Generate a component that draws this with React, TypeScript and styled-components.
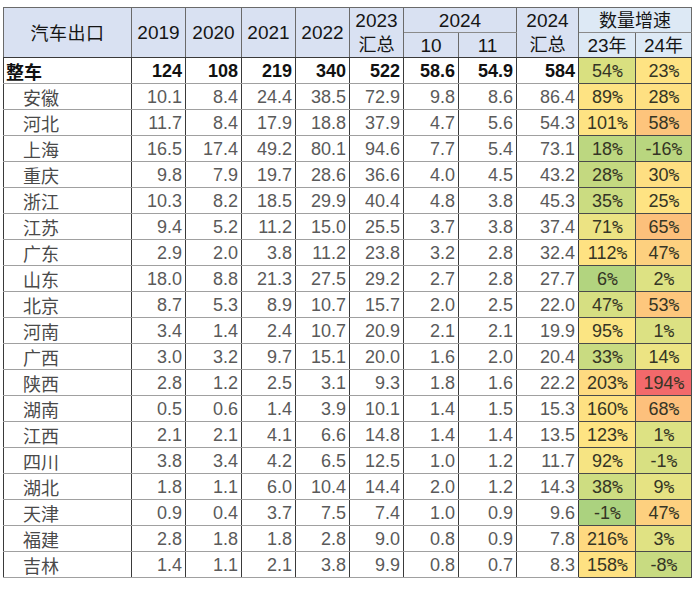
import React from "react";
import styled, { createGlobalStyle } from "styled-components";

const GlobalStyle = createGlobalStyle`
  body {
    margin: 0;
    background: #ffffff;
    font-family: "Liberation Sans", "Noto Sans CJK SC", sans-serif;
  }
`;

type Row = {
  name: string;
  values: string[];
  g23: string;
  g24: string;
  c23: string;
  c24: string;
};

const rows: Row[] = [
  { name: "安徽", values: ["10.1", "8.4", "24.4", "38.5", "72.9", "9.8", "8.6", "86.4"], g23: "89", g24: "28", c23: "#fee383", c24: "#fee082" },
  { name: "河北", values: ["11.7", "8.4", "17.9", "18.8", "37.9", "4.7", "5.6", "54.3"], g23: "101", g24: "58", c23: "#fee383", c24: "#fdc47c" },
  { name: "上海", values: ["16.5", "17.4", "49.2", "80.1", "94.6", "7.7", "5.4", "73.1"], g23: "18", g24: "-16", c23: "#bcd780", c24: "#b9d67f" },
  { name: "重庆", values: ["9.8", "7.9", "19.7", "28.6", "36.6", "4.0", "4.5", "43.2"], g23: "28", g24: "30", c23: "#c4d980", c24: "#fedf82" },
  { name: "浙江", values: ["10.3", "8.2", "18.5", "29.9", "40.4", "4.8", "3.8", "45.3"], g23: "35", g24: "25", c23: "#cbdc81", c24: "#fee383" },
  { name: "江苏", values: ["9.4", "5.2", "11.2", "15.0", "25.5", "3.7", "3.8", "37.4"], g23: "71", g24: "65", c23: "#ece383", c24: "#fcc07b" },
  { name: "广东", values: ["2.9", "2.0", "3.8", "11.2", "23.8", "3.2", "2.8", "32.4"], g23: "112", g24: "47", c23: "#fee282", c24: "#fdd07f" },
  { name: "山东", values: ["18.0", "8.8", "21.3", "27.5", "29.2", "2.7", "2.8", "27.7"], g23: "6", g24: "2", c23: "#b2d47f", c24: "#dde283" },
  { name: "北京", values: ["8.7", "5.3", "8.9", "10.7", "15.7", "2.0", "2.5", "22.0"], g23: "47", g24: "53", c23: "#d6df82", c24: "#fdc77d" },
  { name: "河南", values: ["3.4", "1.4", "2.4", "10.7", "20.9", "2.1", "2.1", "19.9"], g23: "95", g24: "1", c23: "#fbe583", c24: "#dce183" },
  { name: "广西", values: ["3.0", "3.2", "9.7", "15.1", "20.0", "1.6", "2.0", "20.4"], g23: "33", g24: "14", c23: "#c9db81", c24: "#ece483" },
  { name: "陕西", values: ["2.8", "1.2", "2.5", "3.1", "9.3", "1.8", "1.6", "22.2"], g23: "203", g24: "194", c23: "#fedb81", c24: "#f2696b" },
  { name: "湖南", values: ["0.5", "0.6", "1.4", "3.9", "10.1", "1.4", "1.5", "15.3"], g23: "160", g24: "68", c23: "#fee182", c24: "#fdc07c" },
  { name: "江西", values: ["2.1", "2.1", "4.1", "6.6", "14.8", "1.4", "1.4", "13.5"], g23: "123", g24: "1", c23: "#fee483", c24: "#dde283" },
  { name: "四川", values: ["3.8", "3.4", "4.2", "6.5", "12.5", "1.0", "1.2", "11.7"], g23: "92", g24: "-1", c23: "#f6e483", c24: "#d8e082" },
  { name: "湖北", values: ["1.8", "1.1", "6.0", "10.4", "14.4", "2.0", "1.2", "14.3"], g23: "38", g24: "9", c23: "#cedd81", c24: "#e6e383" },
  { name: "天津", values: ["0.9", "0.4", "3.7", "7.5", "7.4", "1.0", "0.9", "9.6"], g23: "-1", g24: "47", c23: "#abd27f", c24: "#fdd07f" },
  { name: "福建", values: ["2.8", "1.8", "1.8", "2.8", "9.0", "0.8", "0.9", "7.8"], g23: "216", g24: "3", c23: "#fed980", c24: "#e0e283" },
  { name: "吉林", values: ["1.4", "1.1", "2.1", "3.8", "9.9", "0.8", "0.7", "8.3"], g23: "158", g24: "-8", c23: "#fee182", c24: "#c8db81" },
];

const total = {
  values: ["124", "108", "219", "340", "522", "58.6", "54.9", "584"],
  g23: "54",
  g24: "23",
  c23: "#d9e080",
  c24: "#fee383",
};

const widths = [128, 54, 56, 54, 54, 54, 55, 58, 62, 57, 56];

const Page = styled.div`
  padding: 7px 0 0 3px;
`;

const Table = styled.table`
  border-collapse: collapse;
  table-layout: fixed;
  width: 689px;
  border-top: 1px solid #3a3a3a;
  border-left: 1px solid #3a3a3a;
`;

const HeadCell = styled.th<{ $light?: boolean }>`
  height: 24px;
  padding: 0;
  background: ${(p) => (p.$light ? "#dde9f5" : "#d9e1f2")};
  border: 1px solid #6a6a6a;
  border-bottom-color: #3a3a3a;
  color: #151515;
  font-size: 19px;
  font-weight: 400;
  line-height: 23px;
  text-align: center;
  white-space: nowrap;
`;

const SubHeadCell = styled(HeadCell)`
  border-top-color: #8a8a8a;
  border-bottom: 1px solid #3a3a3a;
`;

const Cjk = styled.span`
  font-family: "Noto Sans CJK SC", sans-serif;
  font-size: 18px;
  line-height: 23px;
`;

const TitleCjk = styled(Cjk)`
  letter-spacing: 0.5px;
`;

const BodyRow = styled.tr<{ $bold?: boolean }>`
  height: 26px;
  color: ${(p) => (p.$bold ? "#111111" : "#5a5a5a")};
  font-weight: ${(p) => (p.$bold ? 700 : 400)};
`;

const NameCell = styled.td<{ $bold?: boolean }>`
  padding: 0 0 0 ${(p) => (p.$bold ? 2 : 19)}px;
  border-right: 1px solid #3a3a3a;
  border-bottom: 1px solid #a0a0a0;
  font-family: "Noto Sans CJK SC", sans-serif;
  font-size: 18px;
  line-height: 24px;
  color: ${(p) => (p.$bold ? "#111111" : "#4a4a4a")};
  white-space: nowrap;
`;

const NumCell = styled.td`
  padding: 0 3px 0 0;
  border-right: 1px solid #3a3a3a;
  border-bottom: 1px solid #a0a0a0;
  font-size: 18px;
  line-height: 24px;
  text-align: right;
  white-space: nowrap;
`;

const PctCell = styled.td<{ $bg: string }>`
  padding: 0;
  background: ${(p) => p.$bg};
  border: 1px solid #4a4a4a;
  border-top: none;
  color: #353525;
  font-size: 18px;
  font-weight: 400;
  line-height: 24px;
  text-align: center;
  white-space: nowrap;
`;

const PctSign = styled.span`
  font-family: "DejaVu Sans Mono", monospace;
  font-size: 18px;
  line-height: 20px;
  letter-spacing: -1px;
`;

const Pct = ({ v }: { v: string }) => (
  <>
    {v}
    <PctSign>%</PctSign>
  </>
);

const App = () => {
  return (
    <Page>
      <GlobalStyle />
      <Table>
        <colgroup>
          {widths.map((w, i) => (
            <col key={i} style={{ width: w }} />
          ))}
        </colgroup>
        <thead>
          <tr>
            <HeadCell rowSpan={2}>
              <TitleCjk>汽车出口</TitleCjk>
            </HeadCell>
            <HeadCell rowSpan={2}>2019</HeadCell>
            <HeadCell rowSpan={2}>2020</HeadCell>
            <HeadCell rowSpan={2}>2021</HeadCell>
            <HeadCell rowSpan={2}>2022</HeadCell>
            <HeadCell rowSpan={2}>
              2023
              <br />
              <Cjk>汇总</Cjk>
            </HeadCell>
            <HeadCell colSpan={2} style={{ borderBottomColor: "#8a8a8a" }}>
              2024
            </HeadCell>
            <HeadCell rowSpan={2}>
              2024
              <br />
              <Cjk>汇总</Cjk>
            </HeadCell>
            <HeadCell colSpan={2} $light style={{ borderBottomColor: "#8a8a8a" }}>
              <Cjk>数量增速</Cjk>
            </HeadCell>
          </tr>
          <tr>
            <SubHeadCell>10</SubHeadCell>
            <SubHeadCell>11</SubHeadCell>
            <SubHeadCell $light>
              23<Cjk>年</Cjk>
            </SubHeadCell>
            <SubHeadCell $light>
              24<Cjk>年</Cjk>
            </SubHeadCell>
          </tr>
        </thead>
        <tbody>
          <BodyRow $bold>
            <NameCell $bold>整车</NameCell>
            {total.values.map((v, i) => (
              <NumCell key={i}>{v}</NumCell>
            ))}
            <PctCell $bg={total.c23}>
              <Pct v={total.g23} />
            </PctCell>
            <PctCell $bg={total.c24}>
              <Pct v={total.g24} />
            </PctCell>
          </BodyRow>
          {rows.map((r) => (
            <BodyRow key={r.name}>
              <NameCell>{r.name}</NameCell>
              {r.values.map((v, i) => (
                <NumCell key={i}>{v}</NumCell>
              ))}
              <PctCell $bg={r.c23}>
                <Pct v={r.g23} />
              </PctCell>
              <PctCell $bg={r.c24}>
                <Pct v={r.g24} />
              </PctCell>
            </BodyRow>
          ))}
        </tbody>
      </Table>
    </Page>
  );
};

export default App;
